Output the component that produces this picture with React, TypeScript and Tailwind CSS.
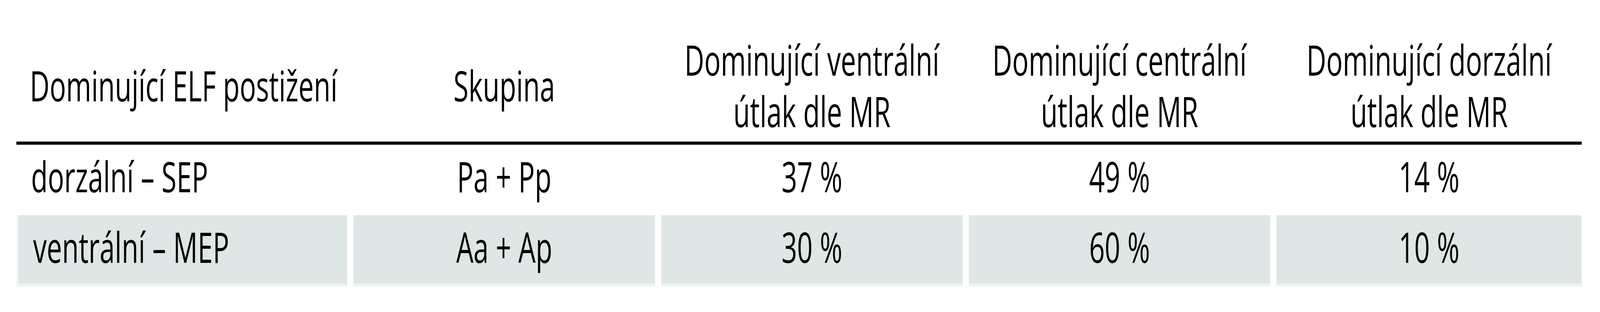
import React from 'react';

const font = { fontFamily: '"Open Sans", "Noto Sans", sans-serif' };

const headers = [
  ['Dominující ELF postižení'],
  ['Skupina'],
  ['Dominující ventrální', 'útlak dle MR'],
  ['Dominující centrální', 'útlak dle MR'],
  ['Dominující dorzální', 'útlak dle MR'],
];

const rows = [
  ['dorzální – SEP', 'Pa + Pp', '37 %', '49 %', '14 %'],
  ['ventrální – MEP', 'Aa + Ap', '30 %', '60 %', '10 %'],
];

const cols = 'grid grid-cols-[1310px_1193px_1193px_1193px_1208px] gap-x-[25px]';

export default function App() {
  return (
    <div className="w-full h-[800px] overflow-hidden bg-white text-black" style={font}>
      {/* the table is drawn for a 6335px wide sheet and squeezed to the window */}
      <div className="w-[6335px] origin-top-left scale-x-[0.6466]">
        <div className="ml-[65px] w-[6197px] pt-[87px] text-[108px] leading-[132px]">
          {/* header */}
          <div className={`${cols} pb-[12px] border-b-[8px] border-black`}>
            {headers.map((h, i) => (
              <div
                key={i}
                className={`flex items-center h-[264px] whitespace-nowrap ${i === 0 ? 'justify-start pl-[53px]' : 'justify-center text-center'}`}
              >
                <p>
                  {h[0]}
                  {h[1] && (
                    <>
                      <br />
                      {h[1]}
                    </>
                  )}
                </p>
              </div>
            ))}
          </div>

          {/* body */}
          {rows.map((r, ri) => (
            <div key={ri} className={cols}>
              {r.map((cell, ci) => (
                <div
                  key={ci}
                  className={`whitespace-nowrap pt-[15px] ${
                    ri === 1
                      ? 'h-[182px] bg-[#dee6e6] border-b-[7px] border-[#eef2f2]'
                      : 'h-[181px]'
                  } ${ci === 0 ? 'pl-[58px]' : 'text-center'} ${
                    ri === 1 && ci === 0 ? 'border-l-[8px] border-l-[#f1f5f5] pl-[50px]' : ''
                  }`}
                >
                  {cell}
                </div>
              ))}
            </div>
          ))}
        </div>
      </div>
    </div>
  );
}
